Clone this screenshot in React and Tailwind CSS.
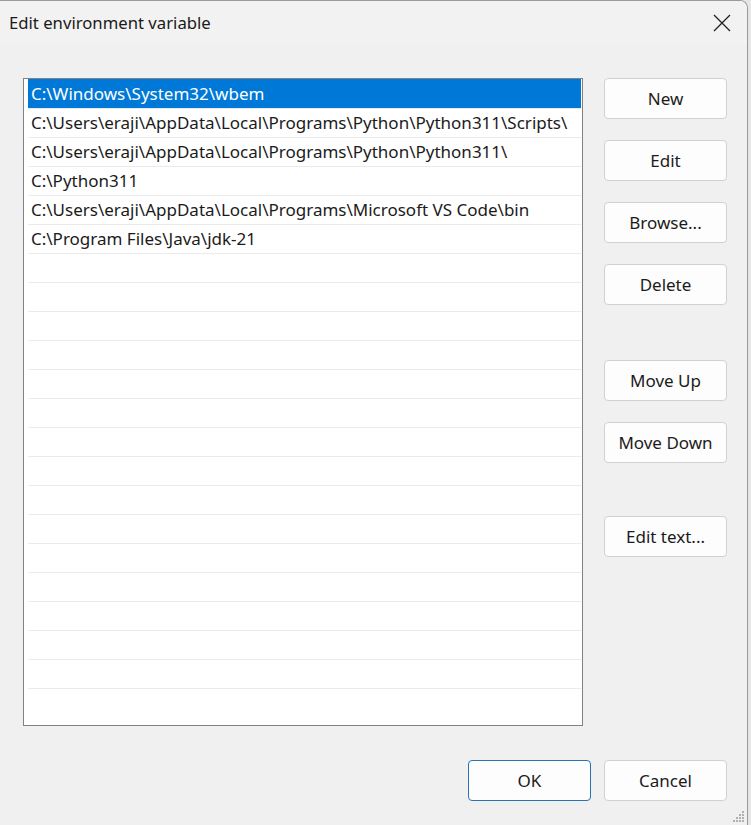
import React from "react";

const rows = [
  "C:\\Windows\\System32\\wbem",
  "C:\\Users\\eraji\\AppData\\Local\\Programs\\Python\\Python311\\Scripts\\",
  "C:\\Users\\eraji\\AppData\\Local\\Programs\\Python\\Python311\\",
  "C:\\Python311",
  "C:\\Users\\eraji\\AppData\\Local\\Programs\\Microsoft VS Code\\bin",
  "C:\\Program Files\\Java\\jdk-21",
];

function Btn({ children, primary, className = "" }) {
  return (
    <button
      className={
        "w-[123px] h-[41px] rounded-[4px] bg-[#fdfdfd] text-[17px] text-[#1b1b1b] flex items-center justify-center border " +
        (primary ? "border-[#2a72b5]" : "border-[#d1d1d1]") +
        " " +
        className
      }
    >
      {children}
    </button>
  );
}

export default function App() {
  const total = 22;
  return (
    <div
      className="w-[751px] h-[825px] bg-[#e6e6e6] overflow-hidden"
      style={{ fontFamily: '"Noto Sans", "Open Sans", sans-serif' }}
    >
      <div className="w-[748px] h-[825px] bg-[#f0f0f0] border-t border-r border-[#9a9a9a] rounded-tr-[8px] flex flex-col relative overflow-hidden">
        <div className="h-[44px] bg-[#f3f2f2] flex items-center justify-between pl-[9px] pr-[16px]">
          <span className="text-[16.7px] text-[#1a1a1a]">Edit environment variable</span>
          <svg width="18" height="18" viewBox="0 0 18 18">
            <path d="M1 1 L17 17 M17 1 L1 17" stroke="#222" strokeWidth="1.3" fill="none" />
          </svg>
        </div>
        <div className="flex pl-[23px] pt-[33px]">
          <div className="w-[560px] h-[648px] border border-[#828282] bg-white pl-[4px] pr-[1px] overflow-hidden">
            {Array.from({ length: total }).map((_, i) => (
              <div
                key={i}
                className={
                  "h-[29px] flex items-center pl-[3px] text-[17px] whitespace-nowrap " +
                  (i === 0
                    ? "bg-[#0078d7] text-white"
                    : "border-t border-[#ebebeb] text-[#1b1b1b]")
                }
              >
                {rows[i] || ""}
              </div>
            ))}
          </div>
          <div className="flex flex-col ml-[21px]">
            <Btn>New</Btn>
            <Btn className="mt-[21px]">Edit</Btn>
            <Btn className="mt-[21px]">Browse...</Btn>
            <Btn className="mt-[21px]">Delete</Btn>
            <Btn className="mt-[55px]">Move Up</Btn>
            <Btn className="mt-[21px]">Move Down</Btn>
            <Btn className="mt-[53px]">Edit text...</Btn>
          </div>
        </div>
        <div className="flex justify-end gap-[13px] pr-[20px] mt-[34px]">
          <Btn primary>OK</Btn>
          <Btn>Cancel</Btn>
        </div>
        <svg width="12" height="12" viewBox="0 0 12 12" className="absolute right-[2px] bottom-[2px]">
          {[
            [9, 0], [6, 3], [9, 3], [3, 6], [6, 6], [9, 6], [0, 9], [3, 9], [6, 9], [9, 9],
          ].map(([x, y], i) => (
            <rect key={i} x={x} y={y} width="2" height="2" fill="#b0b0b0" />
          ))}
        </svg>
      </div>
    </div>
  );
}
